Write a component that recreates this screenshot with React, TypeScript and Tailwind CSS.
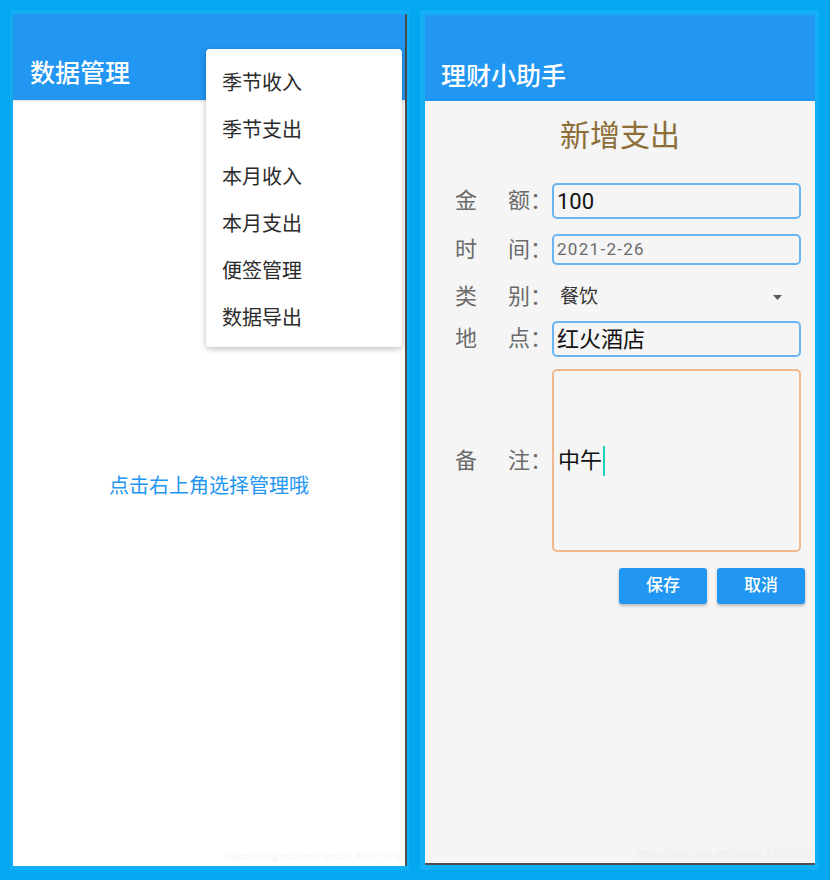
import React from 'react';

const menuItems = ['季节收入', '季节支出', '本月收入', '本月支出', '便签管理', '数据导出'];

function Label({ first, second }: { first: string; second: string }) {
  return (
    <div className="w-[97px] flex shrink-0 text-[22px] leading-none text-[#6b6b6b]">
      <span className="w-[53px]">{first}</span>
      <span>{second}：</span>
    </div>
  );
}

function ManagePanel() {
  return (
    <div className="relative w-[394px] h-[852px] bg-white flex flex-col border-r-2 border-[#4d4d4d]">
      <div className="h-[86px] bg-[#2196f3] flex items-end pl-[17px] pb-[10px] shadow-sm">
        <span className="text-[25px] leading-[32px] font-medium text-white">数据管理</span>
      </div>
      <div className="flex-1 flex items-center justify-center pt-[6px]">
        <span className="text-[20px] text-[#2196f3]">点击右上角选择管理哦</span>
      </div>
      <div className="absolute right-[5px] bottom-[2px] text-[10px] text-[#f5f5f5]">
        https://blog.csdn.net/weixin_43827375
      </div>

      {/* popup menu */}
      <div className="absolute left-[193px] top-[35px] w-[196px] pt-[10px] pb-[6px] bg-white rounded-[4px] shadow-[0_2px_6px_rgba(0,0,0,0.25)]">
        {menuItems.map((item) => (
          <div key={item} className="h-[47px] flex items-center pl-4 text-[20px] text-[#2b2b2b]">
            {item}
          </div>
        ))}
      </div>
    </div>
  );
}

function ExpensePanel() {
  return (
    <div className="relative w-[390px] h-[850px] bg-[#f5f5f5] flex flex-col border-b-2 border-[#4d4d4d]">
      <div className="h-[86px] bg-[#2196f3] flex items-end pl-[16px] pb-[8px]">
        <span className="text-[25px] leading-[32px] font-medium text-white">理财小助手</span>
      </div>

      <div className="mt-[14px] h-[40px] flex items-center justify-center text-[30px] text-[#8d6e37]">
        新增支出
      </div>

      <div className="mt-[28px] h-[36px] flex items-center pl-[30px]">
        <Label first="金" second="额" />
        <div className="w-[249px] h-full border-2 border-[#6ab6f4] rounded-[5px] flex items-center pl-[3px] text-[22px] text-[#111]">
          100
        </div>
      </div>

      <div className="mt-[15px] h-[31px] flex items-center pl-[30px]">
        <Label first="时" second="间" />
        <div className="w-[249px] h-full border-2 border-[#6ab6f4] rounded-[5px] flex items-center pl-[3px] text-[17px] tracking-[1.3px] text-[#6b6b6b]">
          2021-2-26
        </div>
      </div>

      <div className="mt-[10px] h-[44px] flex items-center pl-[30px]">
        <Label first="类" second="别" />
        <div className="w-[249px] h-full flex items-center justify-between pl-[8px] pr-[19px] text-[19px] text-[#333]">
          <span>餐饮</span>
          <svg width="9" height="5" viewBox="0 0 9 5">
            <path d="M0 0 L9 0 L4.5 5 Z" fill="#5a5a5a" />
          </svg>
        </div>
      </div>

      <div className="mt-[2px] h-[36px] flex items-center pl-[30px]">
        <Label first="地" second="点" />
        <div className="w-[249px] h-full border-2 border-[#6ab6f4] rounded-[5px] flex items-center pl-[3px] text-[22px] text-[#111]">
          红火酒店
        </div>
      </div>

      <div className="mt-[12px] h-[183px] flex items-center pl-[30px]">
        <Label first="备" second="注" />
        <div className="w-[249px] h-full border-2 border-[#efb98c] rounded-[5px] flex items-center pl-[4px] text-[22px] text-[#111]">
          <span>中午</span>
          <span className="ml-[1px] w-[2px] h-[30px] bg-[#22d3b9]" />
        </div>
      </div>

      <div className="mt-[16px] flex justify-end gap-[10px] pr-[10px]">
        <button className="w-[88px] h-[36px] bg-[#2196f3] rounded-[3px] text-white text-[17px] font-medium shadow-[0_2px_3px_rgba(0,0,0,0.25)]">
          保存
        </button>
        <button className="w-[88px] h-[36px] bg-[#2196f3] rounded-[3px] text-white text-[17px] font-medium shadow-[0_2px_3px_rgba(0,0,0,0.25)]">
          取消
        </button>
      </div>

      <div className="absolute right-[4px] bottom-[2px] text-[10px] text-[#ededed]">
        https://blog.csdn.net/weixin_43827375
      </div>
    </div>
  );
}

export default function App() {
  return (
    <div className="w-[830px] h-[880px] bg-[#03a8f0] flex font-['Roboto','Noto_Sans_CJK_SC',sans-serif]">
      <div className="ml-[10px] mt-[10px] w-[399px] h-[860px] bg-[#12aff5] pl-[3px] pt-[4px]">
        <ManagePanel />
      </div>
      <div className="ml-[11px] mt-[10px] w-[399px] h-[860px] bg-[#12aff5] pl-[5px] pt-[5px]">
        <ExpensePanel />
      </div>
    </div>
  );
}
